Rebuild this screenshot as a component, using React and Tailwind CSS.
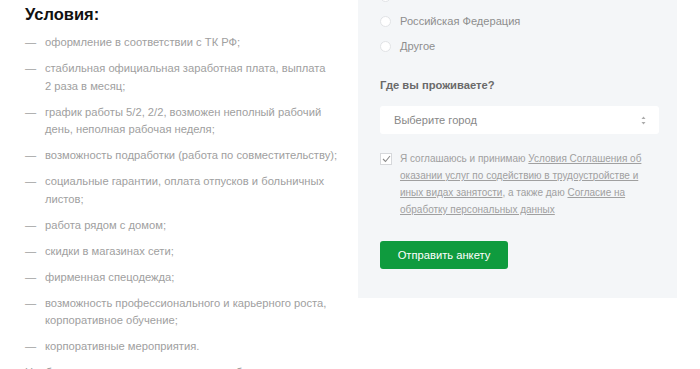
const conditions = [
  'оформление в соответствии с ТК РФ;',
  'стабильная официальная заработная плата, выплата 2\u00a0раза в месяц;',
  'график работы 5/2, 2/2, возможен неполный рабочий день, неполная рабочая неделя;',
  'возможность подработки (работа по совместительству);',
  'социальные гарантии, оплата отпусков и больничных листов;',
  'работа рядом с домом;',
  'скидки в магазинах сети;',
  'фирменная спецодежда;',
  'возможность профессионального и карьерного роста, корпоративное обучение;',
  'корпоративные мероприятия.',
];

const countries = ['Казахстан', 'Российская Федерация', 'Другое'];

function Radio({ label }) {
  return (
    <label className="flex h-[25px] items-center">
      <span className="w-[11px] h-[11px] rounded-full border border-[#e1e3e6] bg-white" />
      <span className="ml-[9px] text-[11.1px] text-[#8e8e8e]">{label}</span>
    </label>
  );
}

export default function App() {
  return (
    <div
      className="w-[700px] h-[369px] overflow-hidden bg-white flex"
      style={{ fontFamily: '"Liberation Sans", Arial, sans-serif' }}
    >
      {/* left column */}
      <div className="w-[333px] pl-[25px] pt-[3px] shrink-0">
        <h2 className="text-[16.5px] leading-[22px] font-bold text-[#111] mb-[9px]">Условия:</h2>
        <ul className="text-[11.2px] leading-[17.5px] text-[#a0a0a0]">
          {conditions.map((c, i) => (
            <li key={i} className="flex mb-[8.5px]">
              <span className="w-[20px] shrink-0">—</span>
              <span className="w-[300px] shrink-0">{c}</span>
            </li>
          ))}
        </ul>
        <p className="text-[11.2px] leading-[17.5px] text-[#a0a0a0] w-[315px]">
          Наибольшие возможности для роста и обучения получают сотрудники нашей сети.
        </p>
      </div>

      {/* form panel */}
      <div className="w-[319px] ml-[25px] mt-[-16px] h-[314px] bg-[#f4f6f8] pl-[22px] pr-[18px] pb-[29px] shrink-0">
        <div>
          {countries.map((c) => (
            <Radio key={c} label={c} />
          ))}
        </div>

        <div className="mt-[18px] text-[11.2px] leading-[17px] font-bold text-[#6a6a6a]">Где вы проживаете?</div>

        <div className="mt-[12px] h-[28px] w-[279px] bg-white rounded-[3px] flex items-center justify-between pl-[14px] pr-[13px]">
          <span className="text-[11.1px] text-[#888]">Выберите город</span>
          <svg width="5" height="9" viewBox="0 0 5 9">
            <path d="M2.5 0.5 L4.5 3 L0.5 3 Z" fill="#aaa" />
            <path d="M2.5 8.5 L4.5 6 L0.5 6 Z" fill="#aaa" />
          </svg>
        </div>

        <div className="mt-[16px] flex">
          <span className="mt-[3px] w-[12px] h-[12px] border border-[#d6d8db] bg-white flex items-center justify-center shrink-0">
            <svg width="9" height="8" viewBox="0 0 9 8">
              <path d="M1 4 L3.5 6.5 L8 1" fill="none" stroke="#8a8a8a" strokeWidth="1.1" />
            </svg>
          </span>
          <p className="ml-[8px] text-[10px] leading-[17px] text-[#a0a0a0] w-[248px]">
            Я соглашаюсь и принимаю{' '}
            <a className="underline">Условия Соглашения об оказании услуг по содействию в трудоустройстве и иных видах занятости</a>
            , а также даю <a className="underline">Согласие на обработку персональных данных</a>
          </p>
        </div>

        <button className="mt-[23px] h-[28px] w-[128px] rounded-[3px] bg-[#0f9b3e] text-white text-[11.2px]">
          Отправить анкету
        </button>
      </div>
    </div>
  );
}
